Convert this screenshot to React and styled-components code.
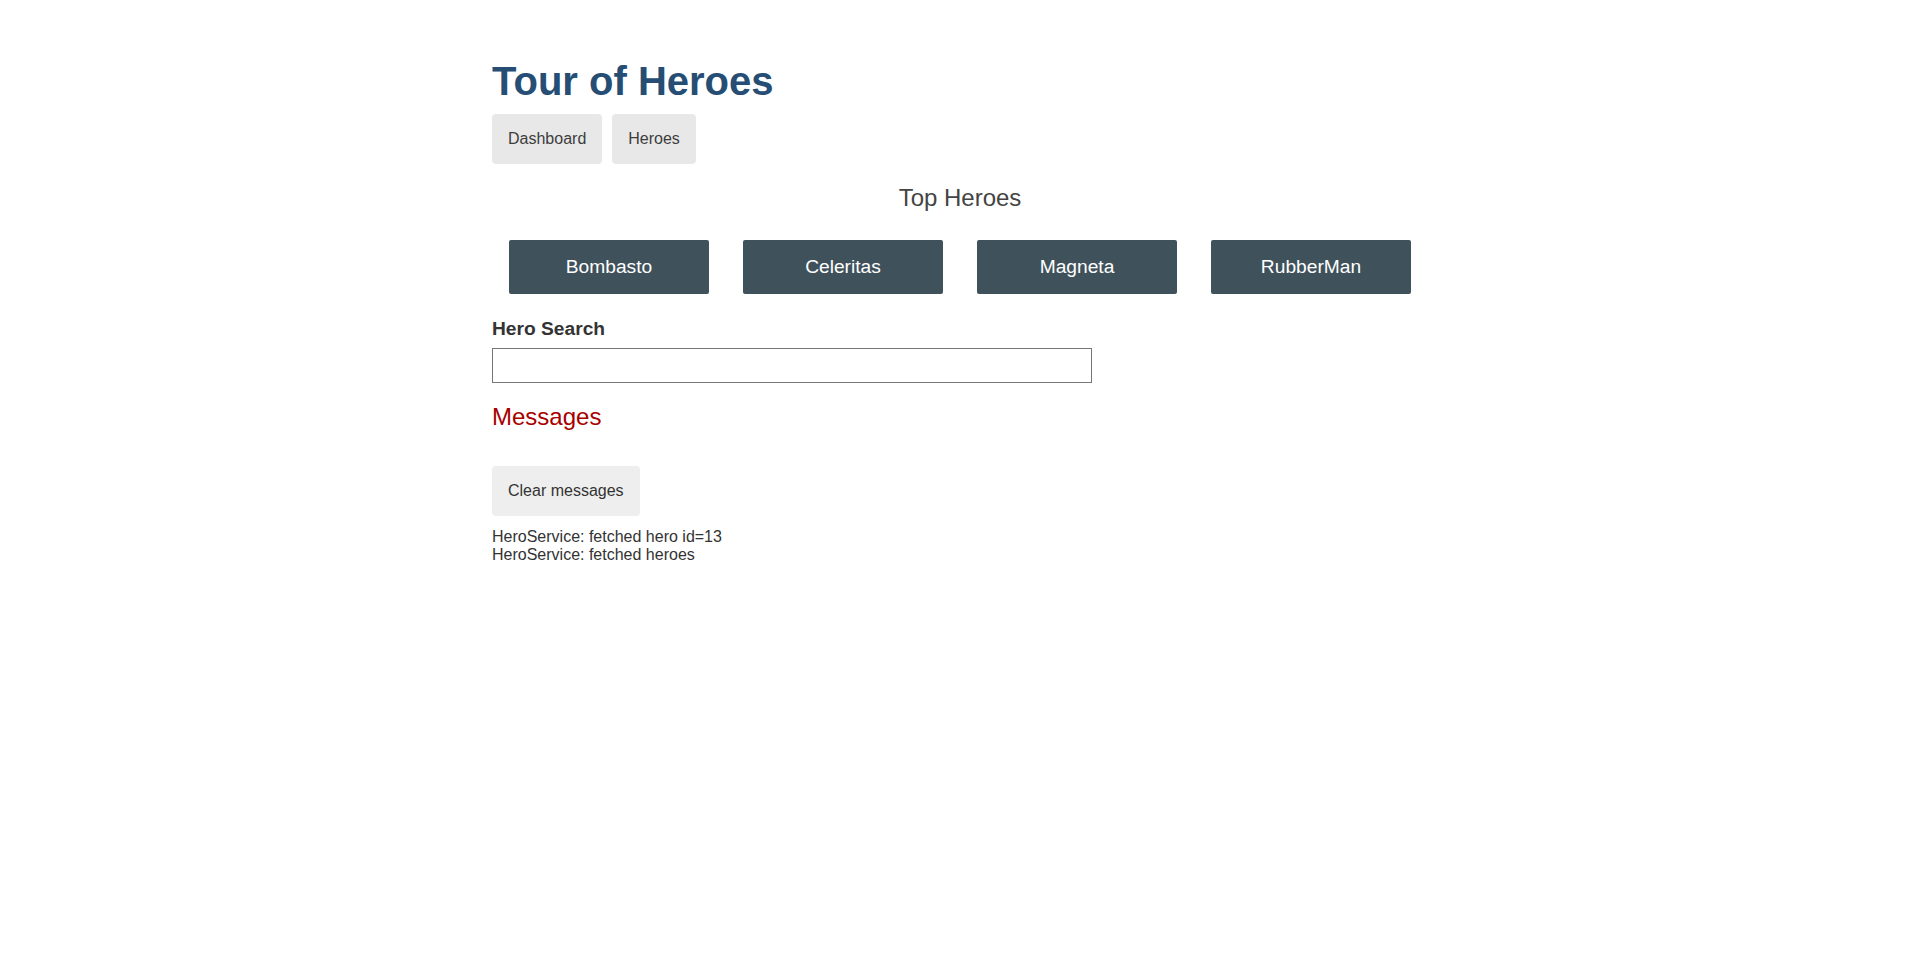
import React from "react";
import styled, { createGlobalStyle } from "styled-components";

const GlobalStyle = createGlobalStyle`
  html, body { margin: 0; padding: 0; background: #fff; }
  body { color: #333; }
  * { font-family: "Liberation Sans", Arial, Helvetica, sans-serif; }
`;

const Page = styled.div`
  max-width: 1000px;
  margin: 0 auto;
  padding: 2rem;
  box-sizing: border-box;
  color: #333;
`;

const Title = styled.h1`
  color: #264d73;
  font-size: 2.5rem;
  font-weight: bold;
  margin: 0.67em 0 0;
`;

const Nav = styled.nav`
  display: flex;
  gap: 10px;
`;

const NavLink = styled.a`
  padding: 1rem;
  text-decoration: none;
  margin-top: 10px;
  display: inline-block;
  background-color: #e8e8e8;
  color: #3d3d3d;
  border-radius: 4px;
  font-size: 16px;
  line-height: normal;
`;

const SectionTitle = styled.h2`
  color: ${(p) => p.$color || "#444"};
  font-weight: lighter;
  font-size: 1.5rem;
  margin: 0.83em 0;
  text-align: ${(p) => p.$align || "left"};
`;

const HeroesMenu = styled.div`
  padding: 0;
  margin: auto;
  max-width: 1000px;
  display: flex;
  flex-direction: row;
  flex-wrap: wrap;
  justify-content: space-around;
  align-content: flex-start;
  align-items: flex-start;
`;

const HeroLink = styled.a`
  background-color: #3f525c;
  border-radius: 2px;
  padding: 1rem;
  font-size: 1.2rem;
  text-decoration: none;
  display: inline-block;
  color: #fff;
  text-align: center;
  width: 18%;
  min-width: 70px;
  margin: 0.5rem auto;
  box-sizing: content-box;
`;

const Search = styled.div``;

const Label = styled.label`
  display: block;
  font-weight: bold;
  font-size: 1.2rem;
  margin-top: 1rem;
  margin-bottom: 0.5rem;
  color: #333;
`;

const SearchInput = styled.input`
  padding: 0.5rem;
  width: 100%;
  max-width: 600px;
  height: 35px;
  box-sizing: border-box;
  display: block;
  font-size: 13.333px;
  line-height: 17px;
  border: 1px solid #767676;
  border-radius: 0;
  color: #333;
  margin: 0;
  outline: none;
`;

const SearchResults = styled.ul`
  margin: 16px 0;
  padding: 0 0 0 40px;
`;

const ClearButton = styled.button`
  color: #333;
  background-color: #eee;
  border: none;
  border-radius: 4px;
  padding: 1rem;
  font-size: 1rem;
  line-height: normal;
  margin: 1rem 1rem 12px 0;
  cursor: pointer;
`;

const Message = styled.div`
  font-size: 16px;
  color: #333;
`;

const heroes = ["Bombasto", "Celeritas", "Magneta", "RubberMan"];
const messages = ["HeroService: fetched hero id=13", "HeroService: fetched heroes"];

export default function App() {
  return (
    <>
      <GlobalStyle />
      <Page>
        <Title>Tour of Heroes</Title>
        <Nav>
          <NavLink href="#">Dashboard</NavLink>
          <NavLink href="#">Heroes</NavLink>
        </Nav>
        <SectionTitle $align="center">Top Heroes</SectionTitle>
        <HeroesMenu>
          {heroes.map((h) => (
            <HeroLink key={h} href="#">
              {h}
            </HeroLink>
          ))}
        </HeroesMenu>
        <Search>
          <Label htmlFor="search-box">Hero Search</Label>
          <SearchInput id="search-box" type="text" />
          <SearchResults />
        </Search>
        <div>
          <SectionTitle $color="#a80000">Messages</SectionTitle>
          <ClearButton>Clear messages</ClearButton>
          {messages.map((m) => (
            <Message key={m}>{m}</Message>
          ))}
        </div>
      </Page>
    </>
  );
}
